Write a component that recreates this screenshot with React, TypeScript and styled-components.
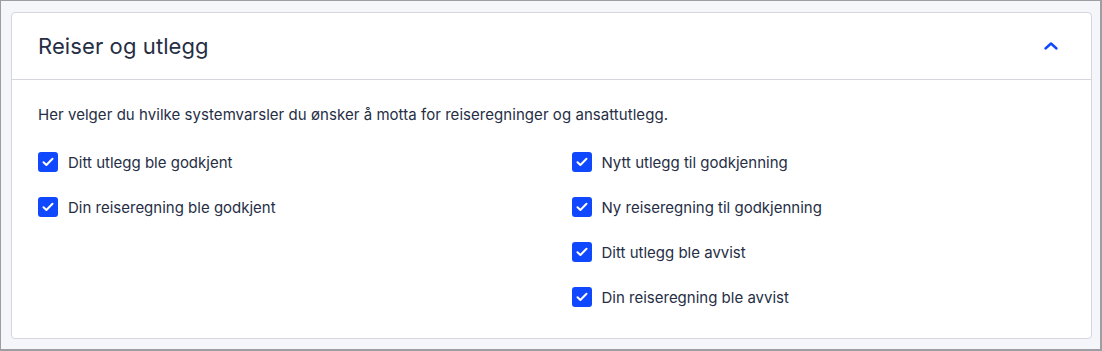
import styled, { createGlobalStyle } from 'styled-components';

const GlobalStyle = createGlobalStyle`
  html, body {
    margin: 0;
    padding: 0;
  }
  body {
    font-family: Inter, "Noto Sans", sans-serif;
    background: #fff;
  }
`;

const Frame = styled.div`
  box-sizing: border-box;
  width: 1102px;
  height: 351px;
  border: 2px solid #9c9ea4;
  border-left-width: 1px;
  border-top-width: 1px;
  background: #f5f6fa;
  padding: 11px 8px 11px 10px;
`;

const Card = styled.section`
  box-sizing: border-box;
  height: 327px;
  background: #fff;
  border: 1px solid #d5d7dd;
  border-radius: 4px;
`;

const Header = styled.div`
  display: flex;
  align-items: center;
  justify-content: space-between;
  height: 66px;
  padding: 0 32px 0 26px;
  border-bottom: 1px solid #d5d7dd;
`;

const Title = styled.h2`
  margin: 0;
  font-size: 22px;
  font-weight: 400;
  color: #262e45;
  letter-spacing: 0.1px;
`;

const Toggle = styled.button`
  border: 0;
  background: none;
  padding: 0;
  display: flex;
  cursor: pointer;
`;

const Body = styled.div`
  padding: 25px 26px 0 26px;
`;

const Intro = styled.p`
  margin: 0 0 27px;
  font-size: 15px;
  line-height: 20px;
  letter-spacing: 0.05px;
  color: #262e45;
`;

const Columns = styled.div`
  display: grid;
  grid-template-columns: 1fr 1fr;
  column-gap: 40px;
`;

const List = styled.div`
  display: flex;
  flex-direction: column;
  gap: 25px;
`;

const Row = styled.label`
  display: flex;
  align-items: center;
  gap: 10px;
  height: 20px;
  font-size: 15px;
  color: #262e45;
  cursor: pointer;
`;

const Box = styled.span`
  display: flex;
  align-items: center;
  justify-content: center;
  width: 20px;
  height: 20px;
  border-radius: 3px;
  background: #0f48ff;
  flex-shrink: 0;
`;

const Check = () => (
  <Box>
    <svg width="12" height="10" viewBox="0 0 12 10" fill="none">
      <path d="M1.5 5.2 4.4 8 10.5 1.8" stroke="#fff" strokeWidth="2" strokeLinecap="round" strokeLinejoin="round" />
    </svg>
  </Box>
);

const left = ['Ditt utlegg ble godkjent', 'Din reiseregning ble godkjent'];
const right = [
  'Nytt utlegg til godkjenning',
  'Ny reiseregning til godkjenning',
  'Ditt utlegg ble avvist',
  'Din reiseregning ble avvist',
];

export default function App() {
  return (
    <>
      <GlobalStyle />
      <Frame>
        <Card>
          <Header>
            <Title>Reiser og utlegg</Title>
            <Toggle aria-label="Skjul">
              <svg width="16" height="10" viewBox="0 0 16 10" fill="none">
                <path d="M2.5 7.5 8 2.5l5.5 5" stroke="#0f48ff" strokeWidth="2.4" strokeLinecap="round" strokeLinejoin="round" />
              </svg>
            </Toggle>
          </Header>
          <Body>
            <Intro>Her velger du hvilke systemvarsler du ønsker å motta for reiseregninger og ansattutlegg.</Intro>
            <Columns>
              <List>
                {left.map((t) => (
                  <Row key={t}>
                    <Check />
                    {t}
                  </Row>
                ))}
              </List>
              <List>
                {right.map((t) => (
                  <Row key={t}>
                    <Check />
                    {t}
                  </Row>
                ))}
              </List>
            </Columns>
          </Body>
        </Card>
      </Frame>
    </>
  );
}
